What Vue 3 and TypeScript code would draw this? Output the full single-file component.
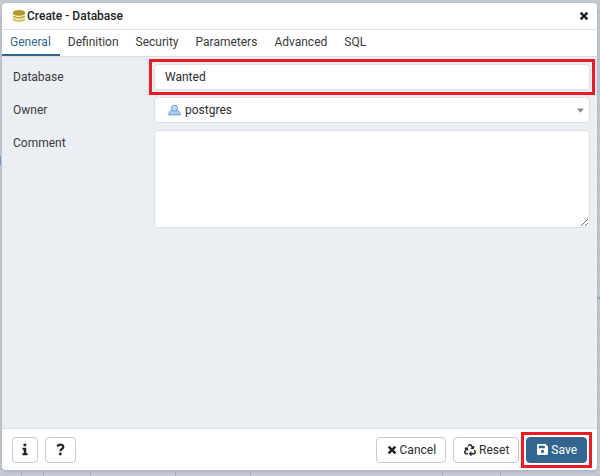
<script setup lang="ts">
import { ref } from 'vue'

const tabs: string[] = ['General', 'Definition', 'Security', 'Parameters', 'Advanced', 'SQL']
const active = ref<string>('General')
const name = ref<string>('Wanted')
const owner = ref<string>('postgres')
const comment = ref<string>('')

function reset(): void {
  name.value = 'Wanted'
  owner.value = 'postgres'
  comment.value = ''
}
</script>

<template>
  <div class="backdrop">
    <form class="dialog" role="dialog" aria-labelledby="dialog-title" @submit.prevent>
      <header class="header">
        <svg class="db-icon" viewBox="0 0 12 12" aria-hidden="true">
          <path d="M0 8v1.600c0 3.200 12 3.200 12 0V8c-1 2.400-11 2.400-12 0z" fill="#d6c459" />
          <path d="M0 5v1.600c0 3 12 3 12 0V5c-1 2.400-11 2.400-12 0z" fill="#c4ab38" />
          <path d="M0 2.400v1.200c0 3 12 3 12 0V2.400z" fill="#b2972b" />
          <ellipse cx="6" cy="2.300" rx="6" ry="2.200" fill="#b2972b" />
        </svg>
        <h1 id="dialog-title" class="title">Create - Database</h1>
        <button class="close" type="button" aria-label="Close">
          <svg viewBox="0 0 10 10" aria-hidden="true"><path d="M1.600 1.600l6.800 6.800M8.400 1.600L1.600 8.400" stroke="#222" stroke-width="2.500" /></svg>
        </button>
      </header>
      <nav class="tabs" role="tablist">
        <button
          v-for="tab in tabs"
          :key="tab"
          type="button"
          role="tab"
          class="tab"
          :class="{ active: tab === active }"
          :aria-selected="tab === active"
          @click="active = tab"
        >{{ tab }}</button>
      </nav>
      <main class="body">
        <div class="row">
          <label for="db-name">Database</label>
          <div class="field mark">
            <input id="db-name" v-model="name" class="control" type="text" />
          </div>
        </div>
        <div class="row">
          <label for="db-owner">Owner</label>
          <div class="field">
            <svg class="user-icon" viewBox="0 0 13 12" aria-hidden="true">
              <path d="M.7 10.900c0-2.200 1.300-4.300 3.300-4.700h5c2 .4 3.300 2.500 3.300 4.700z" fill="#a9cdf0" stroke="#6a9bd4" />
              <circle cx="6.500" cy="4.200" r="3" fill="#bfdcf6" stroke="#6a9bd4" />
            </svg>
            <select id="db-owner" v-model="owner" class="control owner">
              <option>postgres</option>
            </select>
            <svg class="caret" viewBox="0 0 7 5" aria-hidden="true"><path d="M0 .5h7L3.500 4.800z" fill="#888" /></svg>
          </div>
        </div>
        <div class="row">
          <label for="db-comment">Comment</label>
          <div class="field">
            <textarea id="db-comment" v-model="comment" class="control area"></textarea>
          </div>
        </div>
      </main>
      <footer class="footer">
        <button class="btn info" type="button" aria-label="Information">
          <svg viewBox="0 0 6 13" aria-hidden="true"><path d="M1.500.8h2.800v2.500H1.500zM.4 4.800h3.900v5.500h1.300v1.900H.4v-1.900h1.300V6.700H.4z" fill="#222" /></svg>
        </button>
        <button class="btn help" type="button" aria-label="Help">
          <svg viewBox="0 0 9 13" aria-hidden="true">
            <path d="M1.300 3.500C2.800.8 7.300 1.300 7.300 4c0 2-2.900 1.900-2.900 4.200" fill="none" stroke="#222" stroke-width="2.200" />
            <circle cx="4.300" cy="11" r="1.400" fill="#222" />
          </svg>
        </button>
        <span class="spacer"></span>
        <button class="btn" type="button">
          <svg class="glyph" viewBox="0 0 10 10" aria-hidden="true"><path d="M1.600 1.600l6.800 6.800M8.400 1.600L1.600 8.400" stroke="#222" stroke-width="2.500" /></svg>
          Cancel
        </button>
        <button class="btn" type="button" @click="reset">
          <svg class="glyph recycle" viewBox="0 0 512 512" aria-hidden="true">
            <path d="M184.561 261.903c3.232 13.997-12.123 24.635-24.068 17.168l-40.736-25.455-50.867 81.402C55.606 356.273 70.960 384 96.012 384H148c6.627 0 12 5.373 12 12v40c0 6.627-5.373 12-12 12H96.115c-75.334 0-121.302-83.048-81.408-146.880l50.822-81.388-40.725-25.448c-12.081-7.547-8.966-25.961 4.879-29.158l110.237-25.450c8.611-1.988 17.201 3.381 19.189 11.990l25.452 110.237zm98.561-182.915l41.289 66.076-40.740 25.457c-12.051 7.528-9 25.953 4.879 29.158l110.237 25.450c8.672 1.999 17.215-3.438 19.189-11.990l25.450-110.237c3.197-13.844-11.990-24.719-24.068-17.168l-40.687 25.424-41.263-66.082c-37.521-60.033-125.209-60.171-162.816 0l-17.963 28.766c-3.510 5.620-1.800 13.021 3.820 16.533l33.919 21.195c5.620 3.512 13.024 1.803 16.536-3.817l17.961-28.743c12.712-20.341 41.973-19.676 54.257-.022zM497.288 301.120l-27.515-44.065c-3.511-5.623-10.916-7.334-16.538-3.821l-33.861 21.159c-5.620 3.512-7.330 10.915-3.818 16.536l27.564 44.112c13.257 21.211-2.057 48.960-27.136 48.960H320V336.020c0-14.213-17.242-21.383-27.313-11.313l-80 79.981c-6.249 6.248-6.249 16.379 0 22.627l80 79.989C302.689 517.308 320 510.300 320 495.989V448h95.880c75.274 0 121.335-82.997 81.408-146.880z" fill="#222" />
          </svg>
          Reset
        </button>
        <span class="mark">
          <button class="btn primary" type="submit">
            <svg class="glyph" viewBox="0 0 11 11" aria-hidden="true">
              <path fill="#fff" fill-rule="evenodd" d="M1.200 0h7.300L11 2.500v7.300c0 .7-.5 1.200-1.200 1.200H1.200C.5 11 0 10.500 0 9.800V1.200C0 .5.5 0 1.200 0zM1.800 1.800v2.500h6V1.800zM5.500 5.800a1.600 1.600 0 1 0 0 3.200 1.600 1.600 0 0 0 0-3.200z" />
            </svg>
            Save
          </button>
        </span>
      </footer>
    </form>
  </div>
</template>

<style>
body {
  margin: 0;
}
</style>

<style scoped>
* {
  box-sizing: border-box;
}
.backdrop {
  display: flex;
  min-height: 100vh;
  padding: 3px 3px 6px 2px;
  background:
    linear-gradient(#66b4c8, #66b4c8) right 0 top 297px / 3px 2px no-repeat,
    linear-gradient(#5b9bd5, #5b9bd5) left 0 top 156px / 1px 9px no-repeat,
    linear-gradient(#a5acbc, #a5acbc) left 21px bottom 0 / 1px 6px no-repeat,
    linear-gradient(#a5acbc, #a5acbc) left 43px bottom 0 / 1px 6px no-repeat,
    linear-gradient(#a5acbc, #a5acbc) left 90px bottom 0 / 1px 6px no-repeat,
    linear-gradient(#a5acbc, #a5acbc) left 175px bottom 0 / 1px 6px no-repeat,
    linear-gradient(#a5acbc, #a5acbc) left 250px bottom 0 / 1px 6px no-repeat,
    linear-gradient(#a5acbc, #a5acbc) left 442px bottom 0 / 1px 6px no-repeat,
    linear-gradient(#a5acbc, #a5acbc) left 500px bottom 0 / 1px 6px no-repeat,
    repeating-linear-gradient(transparent 0 11px, #b4bac8 11px 12px, transparent 12px 16px) right 0 top 0 / 3px 100% no-repeat,
    #c6cbd6;
  font: 12px/16px Roboto, sans-serif;
  color: #3a3a3a;
}
.dialog {
  flex: 1;
  display: flex;
  flex-direction: column;
  min-width: 0;
  overflow: hidden;
  border-radius: 4px;
  background: #fff;
  box-shadow: 0 1px 4px #a4aab8;
}
.header {
  display: flex;
  align-items: center;
  height: 27px;
  padding: 0 8px 0 11px;
  border-bottom: 1px solid #dfe2e9;
}
.db-icon {
  width: 12px;
  height: 12px;
  margin-right: 2px;
}
.title {
  flex: 1;
  margin: 0;
  font-size: 12px;
  font-weight: 500;
  color: #222;
}
.close {
  display: flex;
  padding: 0;
  border: 0;
  background: none;
}
.close svg {
  width: 10px;
  height: 10px;
}
.tabs {
  display: flex;
  height: 27px;
  border-bottom: 1px solid #dadde5;
}
.tab {
  padding: 0 9px 0 8px;
  border: 0;
  border-bottom: 2px solid transparent;
  background: none;
  font: inherit;
  color: #3a3a3a;
}
.tab.active {
  border-color: #326690;
  color: #326690;
}
.body {
  flex: 1;
  display: flex;
  flex-direction: column;
  gap: 7px;
  padding: 7px 7px 8px 11px;
  background: #ebeef3;
}
.row {
  display: flex;
}
.row label {
  flex: 0 0 141px;
  padding-top: 5px;
}
.field {
  position: relative;
  flex: 1;
  display: flex;
}
.control {
  width: 100%;
  height: 26px;
  padding: 0 10px;
  border: 1px solid #dde0e6;
  border-radius: 4px;
  background: #fff;
  font: inherit;
  color: #2c2c2c;
}
.owner {
  appearance: none;
  padding-left: 30px;
}
.area {
  height: 98px;
  padding: 6px 10px;
  resize: vertical;
}
.user-icon {
  position: absolute;
  top: 7px;
  left: 14px;
  width: 13px;
  height: 12px;
}
.caret {
  position: absolute;
  top: 11px;
  right: 6px;
  width: 7px;
  height: 5px;
}
.footer {
  display: flex;
  align-items: center;
  gap: 7px;
  height: 42px;
  padding: 0 10px;
  border-top: 1px solid #dadde5;
}
.spacer {
  flex: 1;
}
.btn {
  display: flex;
  align-items: center;
  justify-content: center;
  gap: 3px;
  height: 26px;
  padding: 0 9px 0 10px;
  border: 1px solid #c4c9d6;
  border-radius: 4px;
  background: #fff;
  font: inherit;
  color: #2c2c2c;
}
.btn.info {
  width: 26px;
  padding: 0;
}
.btn.help {
  width: 31px;
  padding: 0;
}
.info svg {
  flex: none;
  width: 6px;
  height: 13px;
}
.help svg {
  flex: none;
  width: 9px;
  height: 13px;
}
.glyph {
  width: 10px;
  height: 10px;
}
.recycle {
  width: 12px;
  height: 12px;
}
.mark {
  outline: 3px solid #ed1c24;
  outline-offset: 2px;
}
.btn.primary {
  border-color: #326690;
  background: #326690;
  color: #fff;
}
.primary .glyph {
  width: 11px;
  height: 11px;
}
</style>
